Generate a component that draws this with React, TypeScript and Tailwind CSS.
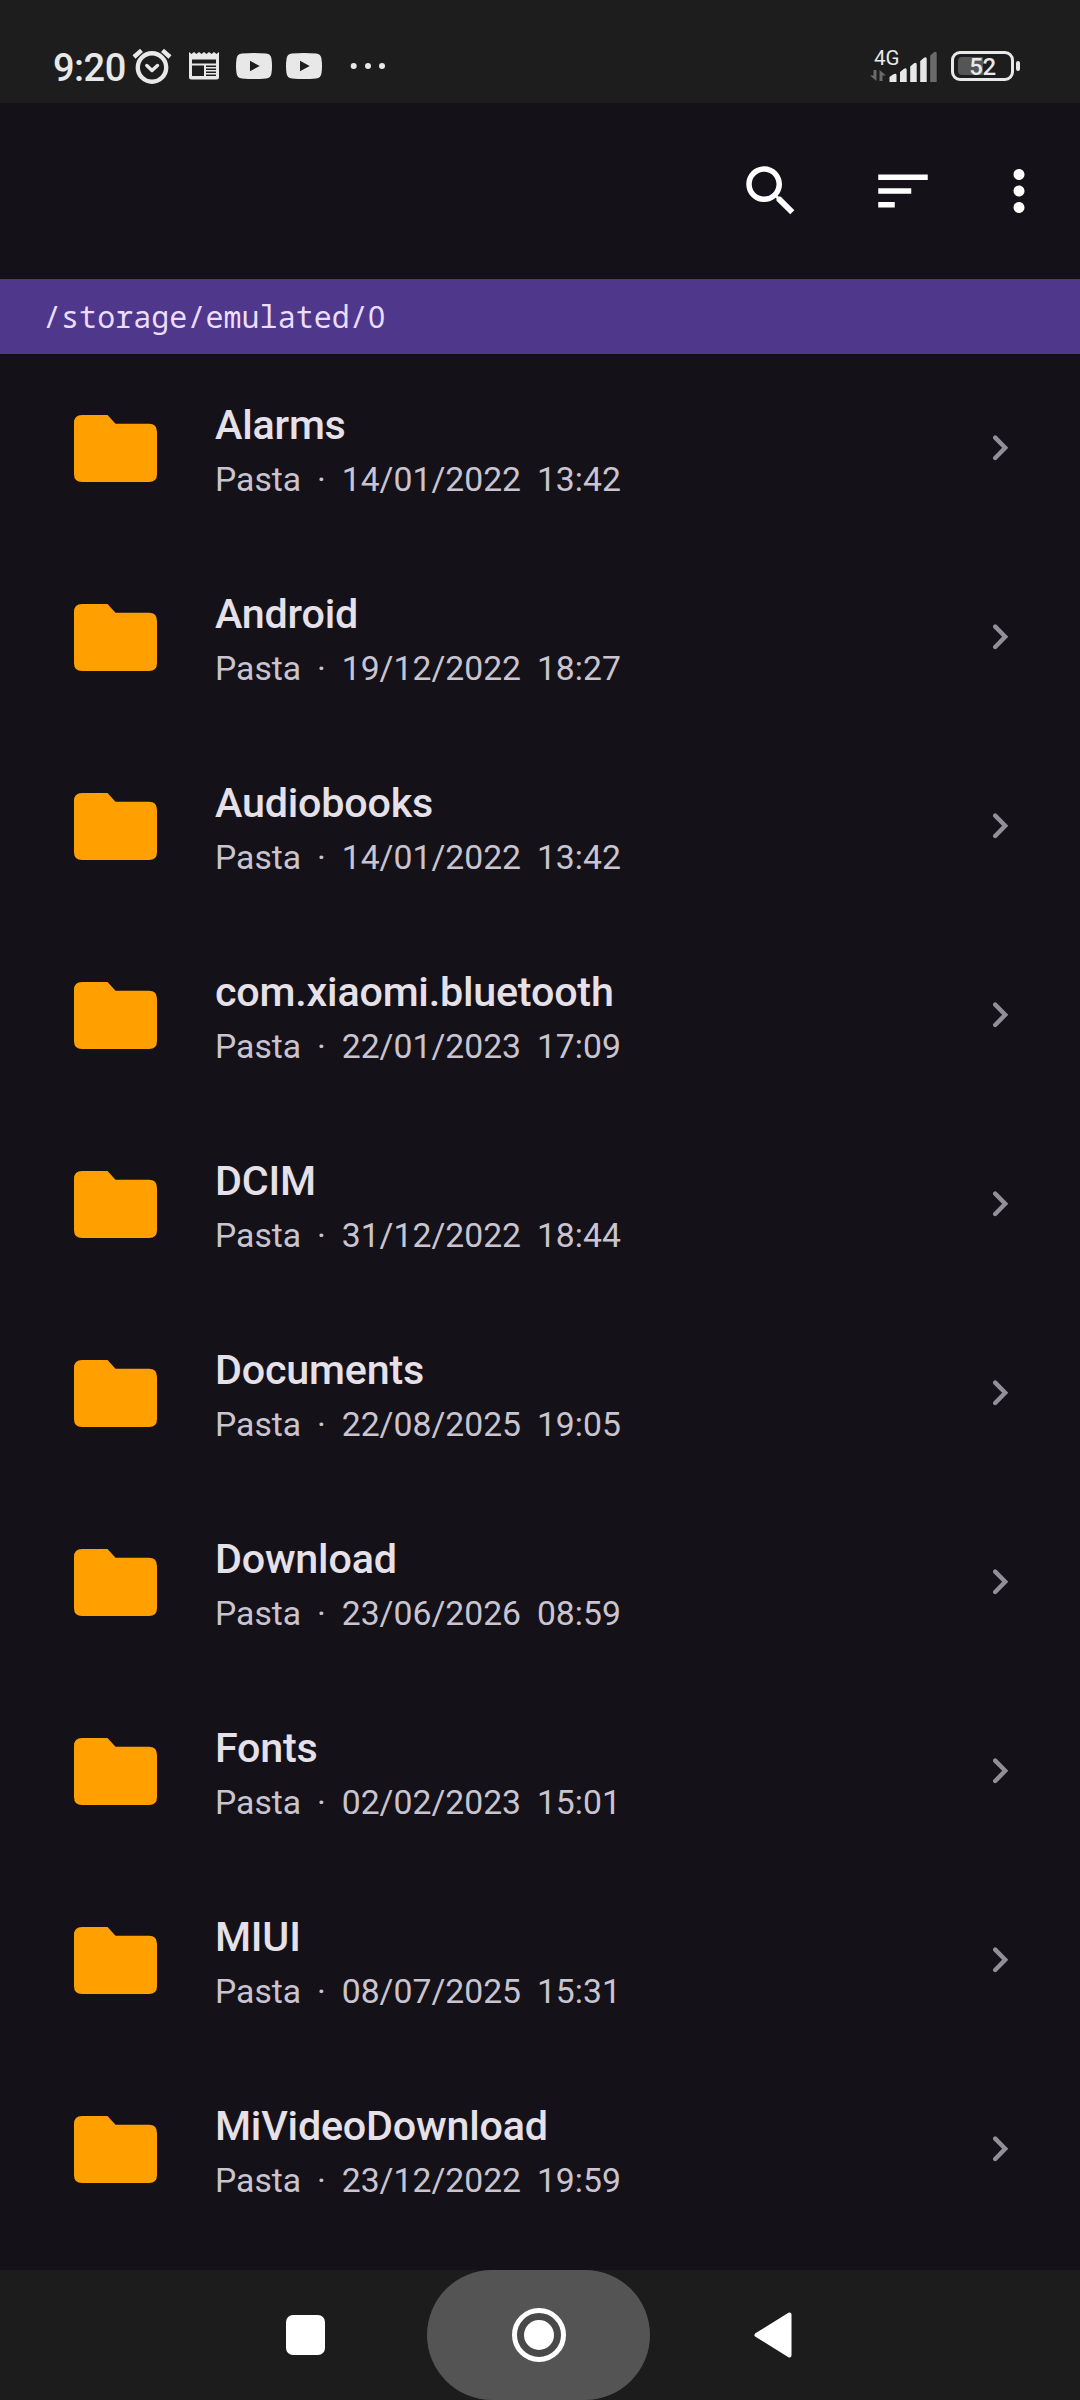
type Folder = {
  name: string;
  modified: string;
};

const folders: Folder[] = [
  { name: 'Alarms', modified: '14/01/2022  13:42' },
  { name: 'Android', modified: '19/12/2022  18:27' },
  { name: 'Audiobooks', modified: '14/01/2022  13:42' },
  { name: 'com.xiaomi.bluetooth', modified: '22/01/2023  17:09' },
  { name: 'DCIM', modified: '31/12/2022  18:44' },
  { name: 'Documents', modified: '22/08/2025  19:05' },
  { name: 'Download', modified: '23/06/2026  08:59' },
  { name: 'Fonts', modified: '02/02/2023  15:01' },
  { name: 'MIUI', modified: '08/07/2025  15:31' },
  { name: 'MiVideoDownload', modified: '23/12/2022  19:59' }
];

function AlarmIcon() {
  return (
    <svg className="ml-[5px] h-[38px] w-[42px]" viewBox="0 0 42 38" fill="none" stroke="#e8e8e8" strokeLinecap="round">
      <circle cx="21" cy="20.5" r="14.2" strokeWidth="4.4" />
      <path d="M3 10 L10.500 3.300 M31.500 3.300 L39 10" strokeWidth="4.4" strokeLinecap="butt" />
      <path d="M15.800 18.500 L21 23.500 L26.500 18.500" strokeWidth="3.4" strokeLinejoin="round" />
    </svg>
  );
}

function NewsIcon() {
  return (
    <svg className="ml-[16px] h-[28px] w-[30px]" viewBox="0 0 30 28">
      <path
        d="M0 0 L2.500 2 L5 0 L7.500 2 L10 0 L12.500 2 L15 0 L17.500 2 L20 0 L22.500 2 L25 0 L27.500 2 L30 0 V25 Q30 27.500 27.500 27.500 H2.500 Q0 27.500 0 25 Z"
        fill="#e8e8e8"
      />
      <path d="M3 7.500 h24 v4 h-24z M3 13.500 h12 v10.500 h-12z" fill="#1d1d1d" />
      <path d="M17 14.200 h10 M17 17.200 h10 M17 20.200 h10 M17 23.200 h10" stroke="#1d1d1d" strokeWidth="1.500" />
    </svg>
  );
}

function VideoIcon() {
  return (
    <svg className="ml-[14px] h-[26px] w-[36px]" viewBox="0 0 36 26">
      <path
        d="M6 .5 Q18 -.5 30 .5 Q35 .8 35.500 6 Q36.500 13 35.500 20 Q35 25.200 30 25.500 Q18 26.500 6 25.500 Q1 25.200 .5 20 Q-.5 13 .5 6 Q1 .8 6 .5 Z"
        fill="#e8e8e8"
      />
      <path d="M14 7.800 L23.700 13 L14 18.300 Z" fill="#1d1d1d" />
    </svg>
  );
}

function StatusBar() {
  return (
    <header className="flex h-[103px] items-start justify-between bg-[#1d1d1d] pt-[44px] pr-[60px] pl-[53px] text-[#e8e8e8]">
      <div className="flex h-[44px] items-center">
        <span className="w-[73px] pt-[4px] text-[38px] leading-[44px] font-medium tracking-[-0.5px] whitespace-nowrap">9:20</span>
        <AlarmIcon />
        <NewsIcon />
        <div className="ml-[3px] flex">
          <VideoIcon />
          <VideoIcon />
        </div>
        <svg className="ml-[28px] h-[6px] w-[36px]" viewBox="0 0 36 6" fill="#e8e8e8">
          <circle cx="3.700" cy="3" r="3" />
          <circle cx="18" cy="3" r="3" />
          <circle cx="32" cy="3" r="3" />
        </svg>
      </div>
      <div className="flex items-start">
        <svg className="h-[42px] w-[70px]" viewBox="0 0 70 42">
          <text x="4" y="20.500" fontFamily="Roboto" fontSize="20.500" fill="#e8e8e8">
            4G
          </text>
          <path d="M6.500 26 V37 L0 31.500 H3.500 V26 Z M9.500 37 V26 L16 31.500 H12.500 V37 Z" fill="#6b6b6b" />
          <path
            d="M19.500 33 L23 30.500 Q26.500 29 26.500 31 V38 H19.500 Z M30 28 L34 24.800 Q36.700 23.500 36.700 26 V38 H30 Z M40.200 22.500 L44 19.300 Q46.700 18 46.700 20.500 V38 H40.200 Z M50.200 17 L54 13.800 Q56.700 12.500 56.700 15 V38 H50.200 Z"
            fill="#e8e8e8"
          />
          <path d="M60.200 11.500 L64 8.300 Q66.700 7 66.700 9.500 V38 H60.200 Z" fill="#6b6b6b" />
        </svg>
        <div className="mt-[7px] ml-[11px] flex items-center">
          <div className="relative flex h-[30px] w-[63px] items-center rounded-[9px] border-3 border-[#e8e8e8] pl-[4px]">
            <div className="h-[18px] w-[25px] rounded-l-[4px] bg-[#555]" />
            <span className="absolute inset-0 text-center text-[24px] leading-[27px] font-medium tracking-[-0.5px]">52</span>
          </div>
          <div className="ml-[2px] h-[10px] w-[4px] rounded-[2px] bg-[#e8e8e8]" />
        </div>
      </div>
    </header>
  );
}

function Toolbar() {
  return (
    <div className="flex h-[176px] items-center justify-end pr-[11px]">
      <button className="flex w-[132px] justify-center">
        <svg className="size-[66px]" viewBox="0 0 24 24" fill="#fff">
          <path d="M15.500 14h-.79l-.28-.27C15.410 12.590 16 11.110 16 9.500 16 5.910 13.090 3 9.500 3S3 5.910 3 9.500 5.910 16 9.500 16c1.610 0 3.090-.59 4.230-1.570l.27.28v.79l5 4.990L20.490 19l-4.990-5zm-6 0C7.010 14 5 11.990 5 9.500S7.010 5 9.500 5 14 7.010 14 9.500 11.990 14 9.500 14z" />
        </svg>
      </button>
      <button className="flex w-[132px] justify-center">
        <svg className="size-[66px]" viewBox="0 0 24 24" fill="#fff">
          <path d="M3 18h6v-2H3v2zM3 6v2h18V6H3zm0 7h12v-2H3v2z" />
        </svg>
      </button>
      <button className="flex w-[100px] justify-center">
        <svg className="size-[66px]" viewBox="0 0 24 24" fill="#fff">
          <path d="M12 8c1.100 0 2-.9 2-2s-.9-2-2-2-2 .9-2 2 .9 2 2 2zm0 2c-1.100 0-2 .9-2 2s.9 2 2 2 2-.9 2-2-.9-2-2-2zm0 6c-1.100 0-2 .9-2 2s.9 2 2 2 2-.9 2-2-.9-2-2-2z" />
        </svg>
      </button>
    </div>
  );
}

function PathBar() {
  return (
    <div className="flex h-[75px] items-center bg-[#4f378b] pl-[43px] font-['Noto_Sans_Mono','DejaVu_Sans_Mono',monospace] text-[30px] tracking-[0.05px] text-[#eaddff]">
      <p>
        /storage/emulated/
        {/* plain zero, without the slash of the mono face */}
        <span className="font-['Noto_Sans',sans-serif]">0</span>
      </p>
    </div>
  );
}

function FolderRow({ folder }: { folder: Folder }) {
  return (
    <li className="flex h-[189px] items-center pr-[71px] pl-[74px]">
      <svg className="h-[67px] w-[83px]" viewBox="0 0 83 67" fill="#ffa000">
        <path d="M8 0 H33.500 L41.500 8.700 H75 Q83 8.700 83 17 V59 Q83 67 75 67 H8 Q0 67 0 59 V8 Q0 0 8 0 Z" />
      </svg>
      <div className="ml-[58px] flex-1 pt-[5px]">
        <p className="text-[41.25px] leading-[50px] font-medium tracking-[-0.2px] text-[#e6e0e9]">{folder.name}</p>
        <p className="mt-[8px] text-[33.7px] leading-[44px] [word-spacing:-0.4px] whitespace-pre text-[#cac4d0]">
          {`Pasta  ·  ${folder.modified}`}
        </p>
      </div>
      <svg className="mb-px h-[26px] w-[16px]" viewBox="0 0 16 26" fill="none" stroke="#938f99" strokeWidth="4.4" strokeLinecap="round">
        <path d="M2.200 2.600 L12.200 12.800 L2.200 23" />
      </svg>
    </li>
  );
}

function NavigationBar() {
  return (
    <nav className="flex h-[130px] items-center bg-[#1c1c1c] pl-[285.5px]">
      <div className="h-[40px] w-[39.5px] rounded-[7px] bg-white" />
      <div className="ml-[102px] flex h-[130px] w-[223px] items-center justify-center rounded-full bg-[#545454]">
        <svg className="size-[58px]" viewBox="0 0 58 58">
          <circle cx="29" cy="29" r="24.500" fill="#494949" stroke="#fff" strokeWidth="5" />
          <circle cx="29" cy="29" r="15" fill="#fff" />
        </svg>
      </div>
      <svg className="ml-[104px] h-[46px] w-[38px]" viewBox="0 0 38 46">
        <path d="M35.500 2.500 V43.500 L2.500 23 Z" fill="#fff" stroke="#fff" strokeWidth="4" strokeLinejoin="round" />
      </svg>
    </nav>
  );
}

export default function App() {
  return (
    <div className="flex h-[2400px] w-[1080px] flex-col overflow-hidden bg-[#141218] font-['Roboto',sans-serif]">
      <StatusBar />
      <Toolbar />
      <PathBar />
      <ul className="flex-1">
        {folders.map((folder) => (
          <FolderRow key={folder.name} folder={folder} />
        ))}
      </ul>
      <NavigationBar />
    </div>
  );
}
